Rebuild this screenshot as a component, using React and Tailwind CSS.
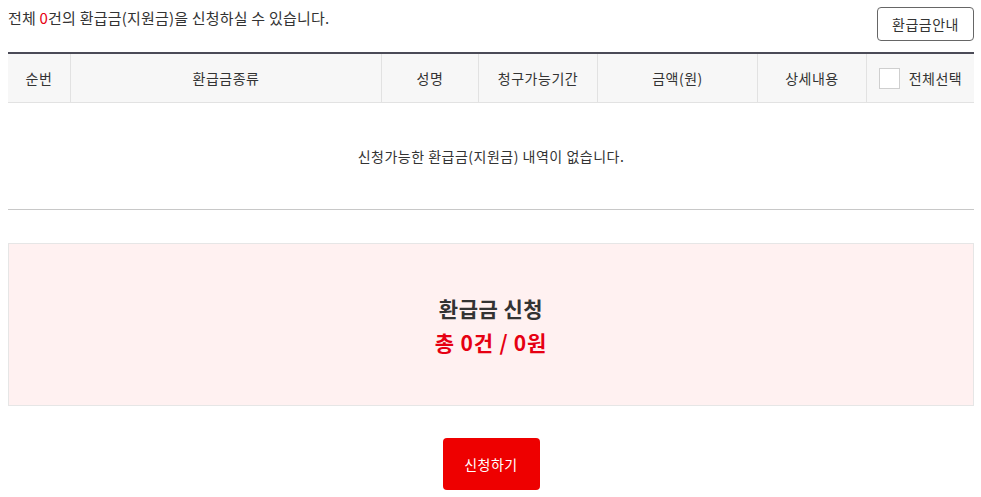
const COLUMNS = ['순번', '환급금종류', '성명', '청구가능기간', '금액(원)', '상세내용']

export default function App() {
  return (
    <div
      className="w-[981px] min-h-[497px] bg-white text-[#333] text-[14px] tracking-[0.5px]"
      style={{ fontFamily: '"Noto Sans CJK KR", "Noto Sans", sans-serif' }}
    >
      <div className="ml-[8px] w-[966px] pt-[7px]">
        <div className="flex items-start justify-between mb-[11px]">
          <p className="mt-[1px] leading-5 text-[15px] tracking-[0.2px]">
            전체 <span className="text-[#e60012]">0</span>건의 환급금(지원금)을 신청하실 수 있습니다.
          </p>
          <button className="h-[34px] w-[97px] rounded-[4px] border border-[#666] bg-white text-[14px] text-[#333]">
            환급금안내
          </button>
        </div>

        <div className="border-t-2 border-[#4b4b57]">
          <div className="grid grid-cols-[63px_311px_97px_119px_160px_109px_107px] h-[49px] bg-[#f7f7f7] border-b border-[#e2e2e2]">
            {COLUMNS.map((c) => (
              <div key={c} className="flex items-center justify-center border-r border-[#e2e2e2]">
                {c}
              </div>
            ))}
            <div className="flex items-center justify-center gap-[9px]">
              <span className="w-[21px] h-[21px] border border-[#cfcfcf] bg-white" />
              전체선택
            </div>
          </div>
          <div className="h-[107px] flex items-center justify-center border-b border-[#c8c8c8]">
            신청가능한 환급금(지원금) 내역이 없습니다.
          </div>
        </div>

        <div className="mt-[33px] h-[163px] border border-[#e6e6e6] bg-[#fff1f1] flex flex-col items-center justify-center">
          <h2 className="text-[21px] leading-[34px] font-bold text-[#333]">환급금 신청</h2>
          <p className="text-[21px] leading-[34px] font-bold text-[#e60012] tracking-[0.8px]">총 0건 / 0원</p>
        </div>

        <div className="mt-[32px] flex justify-center">
          <button className="h-[52px] w-[97px] rounded-[4px] bg-[#ee0000] text-white text-[14px]">
            신청하기
          </button>
        </div>
      </div>
    </div>
  )
}
